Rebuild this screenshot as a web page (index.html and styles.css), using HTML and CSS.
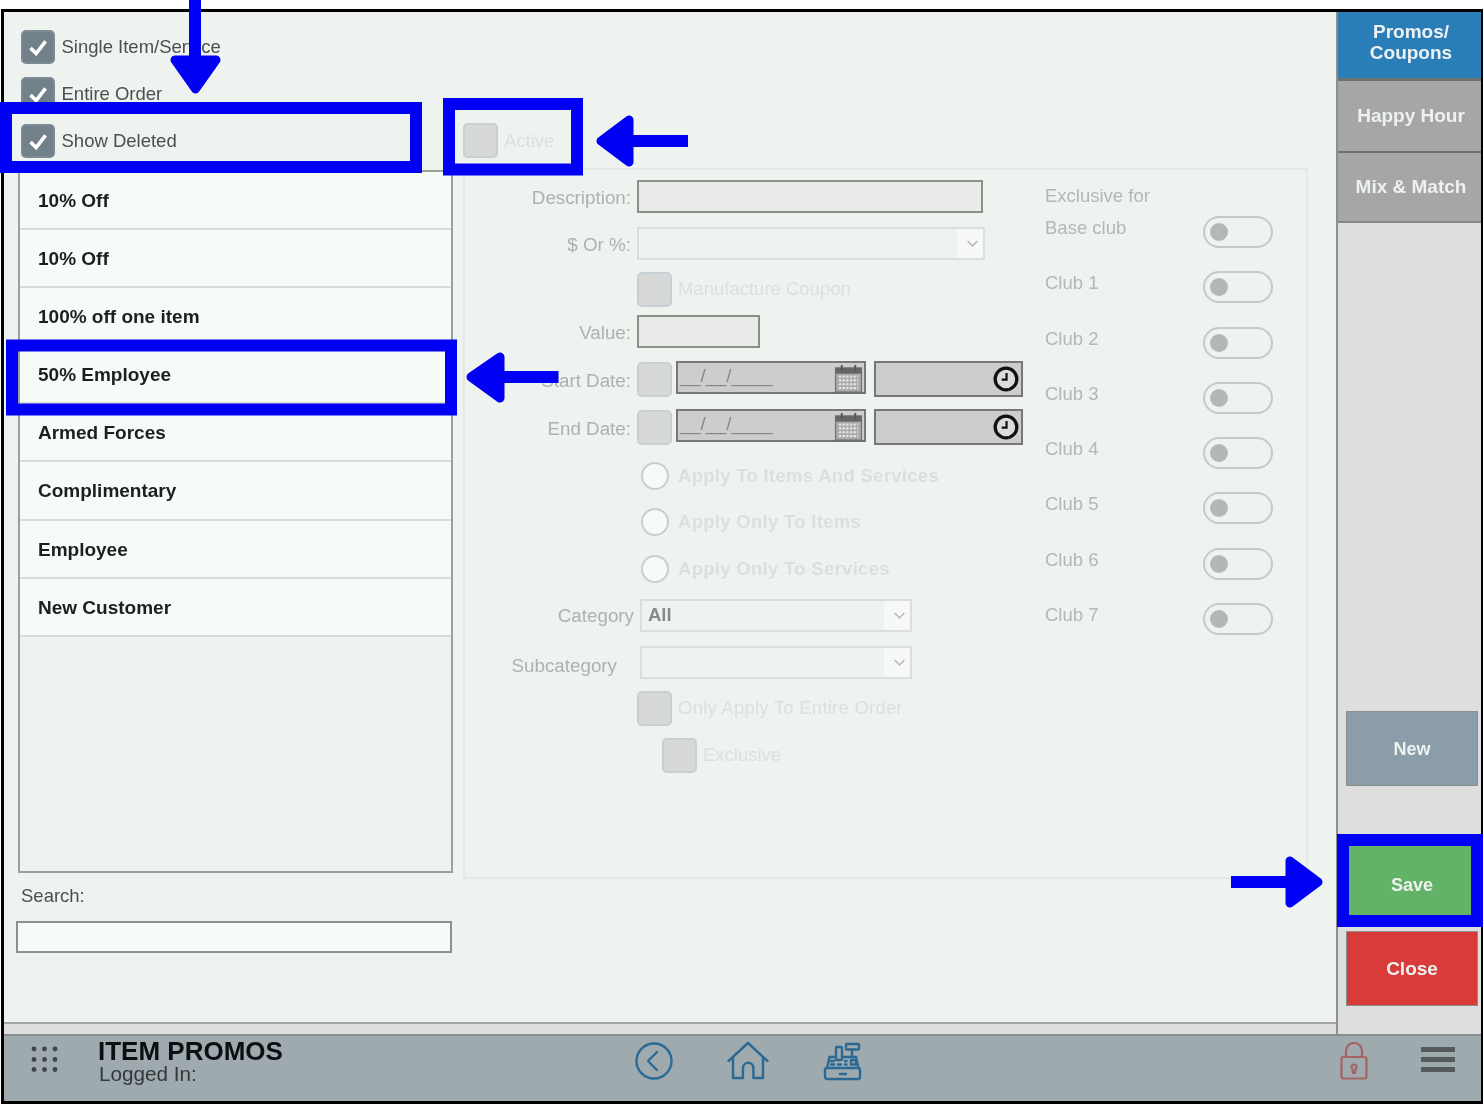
FILE: index.html
```html
<!DOCTYPE html>
<html lang="en">
<head>
<meta charset="utf-8">
<title>Item Promos</title>
<link rel="stylesheet" href="styles.css">
</head>
<body>
<div class="frame">
  <div class="main">
    <div class="content">
      <div class="left-col">
        <div class="check-row"><span class="cb on"><svg viewBox="0 0 34 34"><path d="M9 18l6 6 10-13"/></svg></span><span>Single Item/Service</span></div>
        <div class="check-row"><span class="cb on"><svg viewBox="0 0 34 34"><path d="M9 18l6 6 10-13"/></svg></span><span>Entire Order</span></div>
        <div class="check-row"><span class="cb on"><svg viewBox="0 0 34 34"><path d="M9 18l6 6 10-13"/></svg></span><span>Show Deleted</span></div>
        <ul class="list">
          <li>10% Off</li>
          <li>10% Off</li>
          <li>100% off one item</li>
          <li>50% Employee</li>
          <li>Armed Forces</li>
          <li>Complimentary</li>
          <li>Employee</li>
          <li>New Customer</li>
        </ul>
        <div class="search-label">Search:</div>
        <div class="search-input"></div>
      </div>
      <div class="right-col">
        <div class="active-row"><span class="cb"></span><span class="muted">Active</span></div>
        <div class="panel">
          <div class="fields">
            <div class="row first"><label>Description:</label><div class="input wide"></div></div>
            <div class="row"><label>$ Or %:</label><div class="select s-wide"><span class="chev"><svg viewBox="0 0 16 10"><path d="M2 2l6 6 6-6"/></svg></span></div></div>
            <div class="row tight"><label></label><span class="cb"></span><span class="muted">Manufacture Coupon</span></div>
            <div class="row value"><label>Value:</label><div class="input short"></div></div>
            <div class="row step-date"><label>Start Date:</label><span class="cb"></span>
              <div class="date"><span class="mask">__/__/____</span>
                <svg class="cal" viewBox="0 0 30 30"><rect x="1.5" y="4" width="27" height="25" fill="#a9a9a9" stroke="#666"/><rect x="2" y="4" width="26" height="6" fill="#666"/><path d="M8 1v6M22 1v6" stroke="#555" stroke-width="2"/><path d="M5 13h20M5 17h20M5 21h20M5 25h20" stroke="#e6e6e6" stroke-width="2.2" stroke-dasharray="2.4 1.4"/></svg>
              </div>
              <div class="time"><svg class="clock" viewBox="0 0 24 24"><circle cx="12" cy="12" r="10" fill="#dcdcdc" stroke="#111" stroke-width="3"/><path d="M12.5 6.5v6H8" fill="none" stroke="#111" stroke-width="2"/></svg></div>
            </div>
            <div class="row step-date"><label>End Date:</label><span class="cb"></span>
              <div class="date"><span class="mask">__/__/____</span>
                <svg class="cal" viewBox="0 0 30 30"><rect x="1.5" y="4" width="27" height="25" fill="#a9a9a9" stroke="#666"/><rect x="2" y="4" width="26" height="6" fill="#666"/><path d="M8 1v6M22 1v6" stroke="#555" stroke-width="2"/><path d="M5 13h20M5 17h20M5 21h20M5 25h20" stroke="#e6e6e6" stroke-width="2.2" stroke-dasharray="2.4 1.4"/></svg>
              </div>
              <div class="time"><svg class="clock" viewBox="0 0 24 24"><circle cx="12" cy="12" r="10" fill="#dcdcdc" stroke="#111" stroke-width="3"/><path d="M12.5 6.5v6H8" fill="none" stroke="#111" stroke-width="2"/></svg></div>
            </div>
            <div class="row radio-first"><label></label><span class="radio"></span><span class="muted strong">Apply To Items And Services</span></div>
            <div class="row tight"><label></label><span class="radio"></span><span class="muted strong">Apply Only To Items</span></div>
            <div class="row"><label></label><span class="radio"></span><span class="muted strong">Apply Only To Services</span></div>
            <div class="row tight"><label class="cat">Category</label><div class="select s-cat"><span class="sel-text">All</span><span class="chev"><svg viewBox="0 0 16 10"><path d="M2 2l6 6 6-6"/></svg></span></div></div>
            <div class="row"><label class="cat sub">Subcategory</label><div class="select s-cat"><span class="chev"><svg viewBox="0 0 16 10"><path d="M2 2l6 6 6-6"/></svg></span></div></div>
            <div class="row tight"><label></label><span class="cb"></span><span class="muted wider">Only Apply To Entire Order</span></div>
            <div class="row"><label></label><span class="cb indent"></span><span class="muted">Exclusive</span></div>
          </div>
          <div class="clubs">
            <div class="clubs-head">Exclusive for</div>
            <div class="club"><span>Base club</span><span class="toggle"><i></i></span></div>
            <div class="club"><span>Club 1</span><span class="toggle"><i></i></span></div>
            <div class="club"><span>Club 2</span><span class="toggle"><i></i></span></div>
            <div class="club"><span>Club 3</span><span class="toggle"><i></i></span></div>
            <div class="club"><span>Club 4</span><span class="toggle"><i></i></span></div>
            <div class="club"><span>Club 5</span><span class="toggle"><i></i></span></div>
            <div class="club"><span>Club 6</span><span class="toggle"><i></i></span></div>
            <div class="club"><span>Club 7</span><span class="toggle"><i></i></span></div>
          </div>
        </div>
      </div>
    </div>
    <aside class="sidebar">
      <div class="tab tab-blue">Promos/<br>Coupons</div>
      <div class="tab tab-grey">Happy Hour</div>
      <div class="tab tab-grey tab-last">Mix &amp; Match</div>
      <div class="actions">
        <div class="btn btn-new">New</div>
        <div class="btn btn-save">Save</div>
        <div class="btn btn-close">Close</div>
      </div>
    </aside>
  </div>
  <footer class="footer">
    <svg class="dots" viewBox="0 0 27 26"><g fill="#3f4649"><circle cx="3" cy="3" r="2.4"/><circle cx="13.5" cy="3" r="2.4"/><circle cx="24" cy="3" r="2.4"/><circle cx="3" cy="13.5" r="2.4"/><circle cx="13.5" cy="13.5" r="2.4"/><circle cx="24" cy="13.5" r="2.4"/><circle cx="3" cy="23.5" r="2.4"/><circle cx="13.5" cy="23.5" r="2.4"/><circle cx="24" cy="23.5" r="2.4"/></g></svg>
    <div class="title-block">
      <div class="title">ITEM PROMOS</div>
      <div class="logged">Logged In:</div>
    </div>
    <nav class="nav">
      <svg class="nav-icon" viewBox="0 0 40 40"><circle cx="20" cy="20" r="17.5"/><path d="M23 11l-9 9 9 9"/></svg>
      <svg class="nav-icon home" viewBox="0 0 42 40"><path d="M1.5 20L21 2l19.500 18"/><path d="M6 17v20h10V27a5.2 5.2 0 0 1 10.400 0v10H36V17"/></svg>
      <svg class="nav-icon" viewBox="0 0 40 40"><path d="M5 27h31a2 2 0 0 1 2 2v7a2 2 0 0 1-2 2H5a2 2 0 0 1-2-2v-7a2 2 0 0 1 2-2z"/><path d="M5 27l2.500-11h6M21 16h13l2.500 11"/><rect x="14" y="6" width="6" height="13" rx="1"/><rect x="24" y="3" width="13" height="5.500" rx="1"/><path d="M30 8.500V16M18 33h6"/><path d="M9 20h3M9 23.500h3M16 23.500h3M23 20h1.500M23 23.500h1.500M29 19h5v4.500h-5z"/></svg>
    </nav>
    <div class="right-icons">
      <svg class="lock" viewBox="0 0 28 38"><rect x="1.500" y="15" width="25" height="21.500" rx="2"/><path d="M6 15V9a8 8 0 0 1 16 0v6"/><path d="M14 22.500a2.500 2.500 0 0 1 1.500 4.500l-.5 4h-2l-.5-4a2.500 2.500 0 0 1 1.500-4.500z"/></svg>
      <div class="burger"><span></span><span></span><span></span></div>
    </div>
  </footer>
</div>
<svg class="annotations" viewBox="0 0 1484 1106">
  <g class="marks">
    <rect x="6" y="108" width="410" height="59"/>
    <rect x="449" y="104" width="128" height="65.500"/>
    <rect x="12" y="345.500" width="439" height="64"/>
    <rect x="1343" y="840" width="134" height="81"/>
  </g>
  <g class="shafts">
    <rect x="189" y="0" width="12" height="65"/>
    <rect x="625" y="135" width="63" height="12"/>
    <rect x="495" y="371" width="63.500" height="12"/>
    <rect x="1231" y="876" width="60" height="12"/>
  </g>
  <g class="heads">
    <path d="M175 60h41l-20.500 29z"/>
    <path d="M601 141l28-21v42z"/>
    <path d="M471 377l29-20v41z"/>
    <path d="M1290 861v42l28-21z"/>
  </g>
</svg>
</body>
</html>
```
FILE: styles.css
```css
* { box-sizing: border-box; }
html, body { margin: 0; padding: 0; background: #fff; }
body { width: 1484px; height: 1106px; position: relative; overflow: hidden; font-family: "Liberation Sans", Arial, sans-serif; font-size: 18.5px; color: #4a4f52; }

.frame { margin: 9px 0 0 1px; width: 1482px; height: 1095px; border: solid #000; border-width: 3px 2px 3px 3px; display: flex; flex-direction: column; filter: blur(0.45px); }
.main { height: 1022px; display: flex; background: #dedede; }
.content { width: 1332px; height: 1012px; background: #eff3ef; border-bottom: 2px solid #a3a6a3; display: flex; padding-left: 12px; }

/* left column */
.left-col { width: 437px; padding-top: 18px; }
.check-row { display: flex; align-items: center; gap: 6.500px; height: 34px; margin: 0 0 13px 5px; }
.cb { display: block; width: 35px; height: 35px; flex: none; border-radius: 5px; background: #d7d8d8; border: 2px solid #c6d0d4; }
.cb.on { width: 34px; height: 34px; background: #718089; border-color: #7c8b94; }
.cb svg { display: block; margin: -1px; width: 32px; height: 32px; }
.cb svg path { fill: none; stroke: #fff; stroke-width: 3.800; }
.list { list-style: none; margin: -1px 0 0 2px; padding: 0; height: 703px; border: 2px solid #9c9f9c; background: #eff3ef; font-weight: 700; font-size: 19px; color: #1c1f20; }
.list li { height: 58.100px; line-height: 58px; padding-left: 18px; background: #f7fbf7; border-bottom: 2px solid #d9dcd9; }
.search-label { margin: 11px 0 0 5px; line-height: 24px; }
.search-input { height: 32px; width: 436px; margin-top: 13px; background: #f7fbf7; border: 2px solid #8d908d; }

/* right column */
.right-col { width: 845px; margin-left: 10px; }
.active-row { display: flex; align-items: center; gap: 6px; height: 35px; margin-top: 111px; }
.muted { color: #dcdfdc; white-space: nowrap; }
.muted.wider { letter-spacing: .24px; }
.muted.strong { font-weight: 700; font-size: 18.500px; letter-spacing: .3px; }
.panel { display: flex; width: 845px; height: 711px; margin-top: 10px; border: 2px solid #e4e7e4; }
.fields { width: 558px; padding-top: 9px; }
.row { display: flex; align-items: center; gap: 6px; height: 34px; margin-top: 13px; }
.row.first { margin-top: 0; }
.row.tight { margin-top: 12px; }
.row.value { margin-top: 8px; }
.row.step-date { margin-top: 14px; }
.row.radio-first { margin-top: 15px; }
.row label { width: 166px; flex: none; text-align: right; color: #aeb1ae; font-size: 18.800px; padding-top: 3px; }
.row label.cat { width: 169px; padding-top: 1px; }
.row label.sub { padding: 7px 17px 0 0; }
.input { height: 33px; background: #e9ece9; border: 2px solid #8b908b; }
.wide { width: 346px; }
.short { width: 123px; }
.select { height: 33px; position: relative; display: flex; align-items: center; border: 2px solid #dcdedc; }
.s-wide { width: 348px; }
.s-cat { width: 272px; }
.sel-text { font-weight: 700; padding-left: 6px; color: #84898c; }
.chev { position: absolute; right: 0; top: 0; bottom: 0; width: 26px; padding-left: 4px; background: #f6f9f6; display: flex; align-items: center; justify-content: center; }
.chev svg { width: 13px; height: 9px; }
.chev path { fill: none; stroke: #b4b7b4; stroke-width: 1.800; }
.row .cb { margin: 0; }
.row .cb + .date { margin-left: -2px; }
.row .cb.indent { margin-left: 25px; }
.date { position: relative; width: 190px; height: 33px; margin-top: -3px; background: #cdcdcd; border: 2px solid #757875; padding-left: 2px; line-height: 26px; font-size: 18.500px; color: #85888a; }
.cal { position: absolute; right: 1px; top: 1px; width: 29px; height: 29px; }
.time { width: 149px; height: 36px; margin-left: 2px; background: #cdcdcd; border: 2px solid #757875; display: flex; align-items: center; justify-content: flex-end; padding-right: 2px; }
.clock { width: 26px; height: 26px; }
.radio { width: 28px; height: 28px; margin: 0 3px 0 4px; border-radius: 50%; border: 2px solid #c6d0d4; background: #f7fbf7; flex: none; }

.clubs { width: 228px; margin-left: 22px; padding-top: 14px; color: #b4b7b4; }
.clubs-head { height: 32px; line-height: 24px; }
.club { display: flex; justify-content: space-between; height: 55.300px; line-height: 24px; }
.toggle { display: flex; align-items: center; width: 70px; height: 32px; padding-left: 5px; border: 2.500px solid #c6c9c6; border-radius: 16px; }
.toggle i { display: block; width: 18px; height: 18px; border-radius: 50%; background: #b4b7b4; }

/* sidebar */
.sidebar { flex: 1; display: flex; flex-direction: column; border-left: 2px solid #8c8f8c; }
.tab { display: flex; align-items: center; justify-content: center; text-align: center; padding-left: 3px; font-weight: 700; font-size: 19px; line-height: 21px; color: #eef1f1; border-bottom: 2px solid #6f716f; }
.tab-blue { height: 69px; background: #2a7eb8; padding-bottom: 6px; border-bottom-width: 3px; }
.tab-grey { height: 72px; background: #a6a6a6; padding-bottom: 2px; }
.tab-last { height: 70px; padding-bottom: 2px; border-bottom-color: #868886; }
.actions { margin-top: auto; padding: 0 0 28px 8px; display: flex; flex-direction: column; gap: 10px; }
.btn { width: 132px; height: 75px; display: flex; align-items: center; justify-content: center; font-weight: 700; font-size: 18px; color: #eef3ee; border: 1.500px solid #8c8f8c; }
.btn-new { background: #8b9da9; margin-bottom: 50px; padding-top: 2px; }
.btn-save { background: #62b368; border-color: #62b368; padding-top: 3px; }
.btn-close { background: #d93a3a; font-size: 19px; }

/* footer */
.footer { height: 67px; flex: none; display: flex; align-items: flex-start; background: #9eaaae; border-top: 2px solid #868d8f; padding-left: 27px; }
.dots { width: 27px; height: 26px; margin-top: 10px; flex: none; }
.title-block { width: 230px; margin: 2px 0 0 40px; flex: none; }
.title { font-weight: 700; font-size: 26px; line-height: 26px; color: #0c0f12; white-space: nowrap; }
.logged { font-size: 20.700px; line-height: 19px; margin-left: 1px; color: #33383b; }
.nav { display: flex; gap: 53px; margin-left: 306px; margin-top: 5px; }
.nav-icon { width: 40px; height: 40px; flex: none; }
.nav-icon.home { width: 42px; }
.nav-icon * { fill: none; stroke: #2a6a94; stroke-width: 2.400; stroke-linejoin: round; stroke-linecap: round; }
.right-icons { margin-left: auto; display: flex; gap: 53px; padding-right: 26px; margin-top: 6px; }
.lock { width: 28px; height: 38px; }
.lock * { fill: none; stroke: #a46464; stroke-width: 2.200; }
.burger { display: flex; flex-direction: column; gap: 5px; width: 34px; margin-top: 5px; }
.burger span { display: block; height: 5px; background: #555a5c; }

/* blue callouts drawn over the screenshot */
.annotations { position: absolute; left: 0; top: 0; width: 1484px; height: 1106px; pointer-events: none; }
.marks rect { fill: none; stroke: #0000f5; stroke-width: 12px; }
.shafts rect { fill: #0000f5; }
.heads path { fill: #0000f5; stroke: #0000f5; stroke-width: 9px; stroke-linejoin: round; }
```
